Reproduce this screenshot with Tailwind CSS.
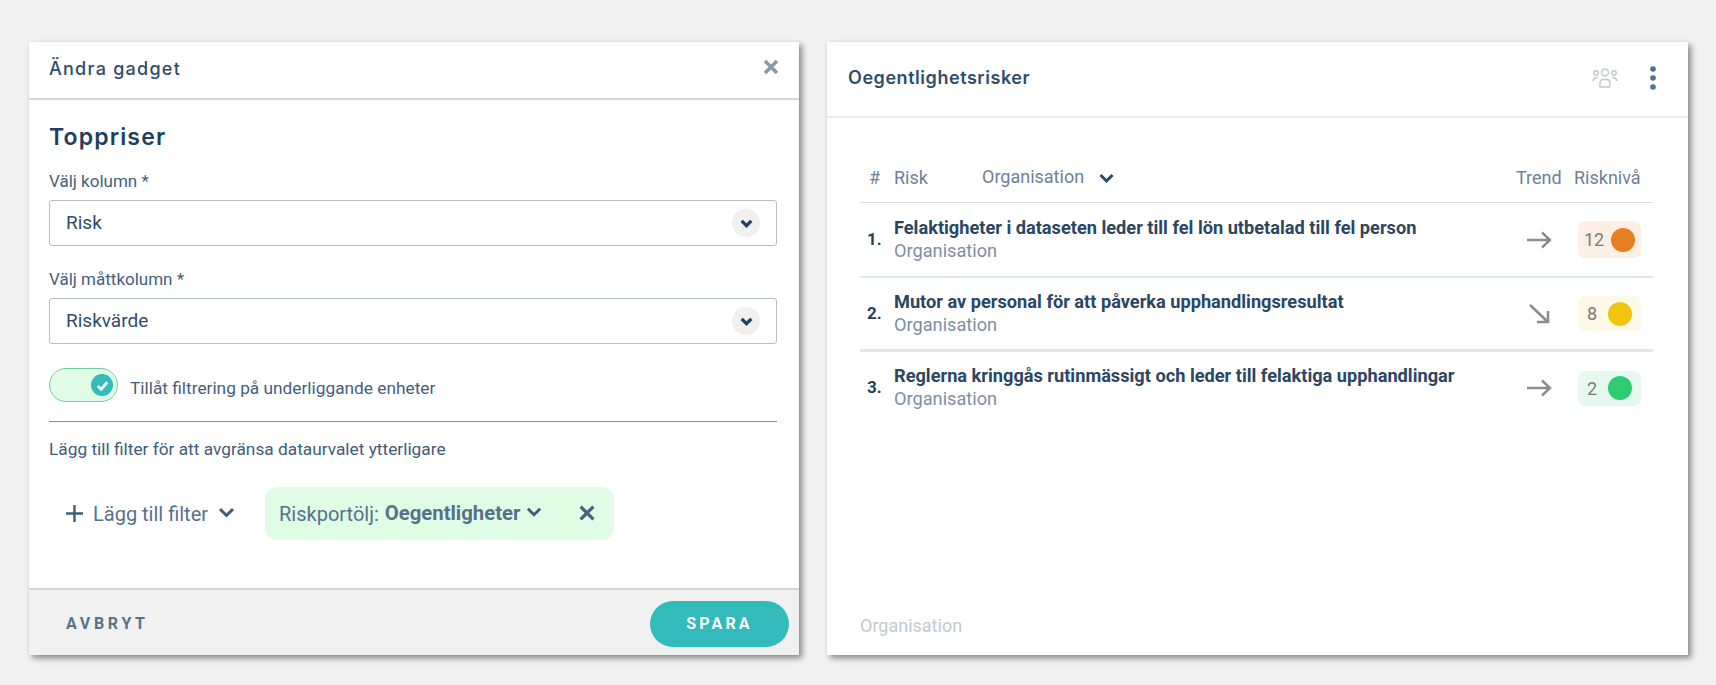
<!DOCTYPE html>
<html lang="sv">
  <head>
    <meta charset="UTF-8">
    <title>Oegentlighetsrisker</title>
    <script src="https://cdn.jsdelivr.net/npm/@tailwindcss/browser@4"></script>
  </head>
  <body class="w-[1716px] h-[685px] overflow-hidden bg-[#f1f1f1] font-['Roboto',sans-serif] text-[#44607c]">
    <div class="flex gap-[28px] pl-[29px] pt-[42px]">
      <!-- edit dialog -->
      <div class="w-[770px] h-[613px] flex flex-col bg-white shadow-[3px_3px_6px_rgba(0,0,0,0.45)]">
        <div class="h-[58px] shrink-0 flex items-center justify-between pl-[20px] pr-[20px] border-b-2 border-[#d5d8db]">
          <span class="mb-[3px] font-['Inter',sans-serif] font-medium text-[18px] tracking-[0.07em] text-[#2f4d69]">Ändra gadget</span>
          <svg class="w-[16px] h-[16px] mb-[7px]" viewBox="0 0 16 16" fill="none" stroke="#8b99a7" stroke-width="3.500">
            <path d="M2 2l12 12M14 2L2 14"></path>
          </svg>
        </div>
        <div class="flex-1 pl-[20px] pr-[22px] pt-[23px]">
          <h2 class="font-['Inter',sans-serif] font-semibold text-[23px] leading-[28px] tracking-[0.05em] text-[#1f3f5f]">Toppriser</h2>
          <label class="block mt-[20px] text-[17px] leading-[20px]">Välj kolumn *</label>
          <div class="mt-[9px] h-[46px] flex items-center justify-between pl-[16px] pr-[16px] border border-[#b4c0cc] rounded-[3px] text-[19px] text-[#2f4d69]">
            <span>Risk</span>
            <span class="w-[28px] h-[28px] flex items-center justify-center rounded-full bg-[#f0f0f0]">
              <svg class="w-[15px] h-[15px]" viewBox="0 0 14 14" fill="none" stroke="#1f3f5f" stroke-width="3"><path d="M2.500 4.500L7 9l4.500-4.500"></path></svg>
            </span>
          </div>
          <label class="block mt-[23px] text-[17px] leading-[20px]">Välj måttkolumn *</label>
          <div class="mt-[9px] h-[46px] flex items-center justify-between pl-[16px] pr-[16px] border border-[#b4c0cc] rounded-[3px] text-[19px] text-[#2f4d69]">
            <span>Riskvärde</span>
            <span class="w-[28px] h-[28px] flex items-center justify-center rounded-full bg-[#f0f0f0]">
              <svg class="w-[15px] h-[15px]" viewBox="0 0 14 14" fill="none" stroke="#1f3f5f" stroke-width="3"><path d="M2.500 4.500L7 9l4.500-4.500"></path></svg>
            </span>
          </div>
          <div class="mt-[24px] h-[34px] flex items-center gap-[12px]">
            <span class="w-[69px] h-[34px] flex items-center justify-end pr-[4px] rounded-full bg-[#e0fce4] border border-[#6fcfa5]">
              <span class="w-[22px] h-[22px] flex items-center justify-center rounded-full bg-[#33baba]">
                <svg class="w-[15px] h-[15px]" viewBox="0 0 14 14" fill="none" stroke="#fff" stroke-width="2.600"><path d="M2.500 7.500L5.800 10.500 11.500 4"></path></svg>
              </span>
            </span>
            <span class="text-[17.3px] mt-[8px]">Tillåt filtrering på underliggande enheter</span>
          </div>
          <div class="mt-[19px] h-px bg-[#8a929a]"></div>
          <p class="mt-[17px] text-[17.3px] leading-[20px] text-[#3f5c78]">Lägg till filter för att avgränsa dataurvalet ytterligare</p>
          <div class="mt-[28px] flex items-center">
            <div class="ml-[16px] w-[200px] flex items-center text-[20px] text-[#56718c]">
              <svg class="w-[19px] h-[19px] mr-[9px]" viewBox="0 0 19 19" fill="none" stroke="#3f5c78" stroke-width="2.400"><path d="M9.500 1v17M1 9.500h17"></path></svg>
              <span>Lägg till filter</span>
              <svg class="w-[17px] h-[17px] ml-[10px] mb-[2px]" viewBox="0 0 17 17" fill="none" stroke="#3f5c78" stroke-width="3"><path d="M2 5l6.500 6.500L15 5"></path></svg>
            </div>
            <div class="w-[349px] h-[53px] flex items-center pl-[14px] rounded-[12px] bg-[#e0fce4] text-[20px] text-[#56718c]">
              <span>Riskportölj:</span>
              <span class="ml-[6px] text-[20.300px] font-bold">Oegentligheter</span>
              <svg class="w-[16px] h-[16px] ml-[6px] mb-[4px]" viewBox="0 0 17 17" fill="none" stroke="#3f5c78" stroke-width="3"><path d="M2 5l6.500 6.500L15 5"></path></svg>
              <svg class="w-[16px] h-[16px] ml-[37px] mb-[2px]" viewBox="0 0 15 15" fill="none" stroke="#44607c" stroke-width="3"><path d="M1.500 1.500l12 12M13.500 1.500l-12 12"></path></svg>
            </div>
          </div>
        </div>
        <div class="h-[67px] shrink-0 flex items-center justify-between pl-[37px] pr-[10px] pt-[3px] bg-[#f1f1f1] border-t-2 border-[#d5d8db]">
          <span class="text-[16px] font-bold tracking-[0.23em] text-[#56718c]">AVBRYT</span>
          <span class="w-[139px] h-[46px] flex items-center justify-center rounded-full bg-[#33baba] text-[16px] font-bold tracking-[0.2em] text-white">SPARA</span>
        </div>
      </div>

      <!-- risk list gadget -->
      <div class="w-[861px] h-[613px] flex flex-col bg-white shadow-[3px_3px_6px_rgba(0,0,0,0.45)]">
        <div class="h-[76px] shrink-0 flex items-center justify-between pl-[21px] pr-[32px] border-b-2 border-[#ececec]">
          <span class="mb-[3px] font-['Inter',sans-serif] font-semibold text-[18px] tracking-[0.55px] text-[#2f4d69]">Oegentlighetsrisker</span>
          <div class="mb-[2px] flex items-center gap-[32px]">
            <svg class="w-[26px] h-[20px]" viewBox="0 0 26 20" fill="none" stroke="#c4c7ca" stroke-width="1.400">
              <circle cx="13" cy="4.500" r="3.500"></circle>
              <circle cx="4" cy="5" r="2.300"></circle>
              <circle cx="22" cy="5" r="2.300"></circle>
              <path d="M8 19v-4.500a3 3 0 0 1 3-3h4a3 3 0 0 1 3 3V18a1 1 0 0 1-1 1H9z"></path>
              <path d="M1 13c.5-2.500 2-3.500 4.500-3.500M25 13c-.5-2.500-2-3.500-4.500-3.500"></path>
            </svg>
            <svg class="w-[6px] h-[24px]" viewBox="0 0 6 24" fill="#4f7191">
              <circle cx="3" cy="3" r="2.800"></circle>
              <circle cx="3" cy="12" r="2.800"></circle>
              <circle cx="3" cy="21" r="2.800"></circle>
            </svg>
          </div>
        </div>
        <div class="flex-1 flex flex-col px-[33px]">
          <div class="mt-[41px] w-[793px] h-[44px] flex items-start pt-[9px] text-[18px] leading-[20px] text-[#6b8299] border-b border-[#d5dde8]">
            <span class="w-[34px] pl-[9px]">#</span>
            <span class="w-[88px]">Risk</span>
            <span class="-mt-[1px]">Organisation</span>
            <svg class="w-[15px] h-[15px] ml-[15px] mt-[3px]" viewBox="0 0 15 15" fill="none" stroke="#264a6b" stroke-width="3"><path d="M1.500 4l6 6 6-6"></path></svg>
            <span class="ml-auto w-[58px]">Trend</span>
            <span class="w-[79px]">Risknivå</span>
          </div>

          <div class="w-[793px] h-[75px] flex items-center border-b-2 border-[#e1e5ec]">
            <span class="w-[34px] pl-[7px] text-[17px] font-bold text-[#1f3f5f]">1.</span>
            <div class="flex-1 -mt-[1px]">
              <p class="text-[18.200px] leading-[23px] font-bold text-[#2a4662]">Felaktigheter i dataseten leder till fel lön utbetalad till fel person</p>
              <p class="text-[18.200px] leading-[23px] text-[#7b8fa3]">Organisation</p>
            </div>
            <svg class="w-[26px] h-[18px] mr-[26px]" viewBox="0 0 26 18" fill="none" stroke="#8c8c8c" stroke-width="2.400"><path d="M1 9h23M16 1.500L24 9l-8 7.500"></path></svg>
            <div class="w-[63px] h-[37px] mr-[12px] flex items-center justify-between pl-[6px] pr-[6px] rounded-[7px] bg-[#fdefe4] text-[18px] text-[#7a7a7a]">
              <span>12</span><span class="w-[24px] h-[24px] rounded-full bg-[#e67e22]"></span>
            </div>
          </div>

          <div class="w-[793px] h-[74px] flex items-center border-b-[3px] border-[#e1e5ec]">
            <span class="w-[34px] pl-[7px] text-[17px] font-bold text-[#1f3f5f]">2.</span>
            <div class="flex-1 -mt-[2px]">
              <p class="text-[18.200px] leading-[23px] font-bold text-[#2a4662]">Mutor av personal för att påverka upphandlingsresultat</p>
              <p class="text-[18.200px] leading-[23px] text-[#7b8fa3]">Organisation</p>
            </div>
            <svg class="w-[21px] h-[20px] mr-[28px]" viewBox="0 0 21 20" fill="none" stroke="#8c8c8c" stroke-width="2.600"><path d="M1 1l18 17M19 7v11H8"></path></svg>
            <div class="w-[63px] h-[35px] mr-[12px] flex items-center justify-between pl-[9px] pr-[9px] rounded-[7px] bg-[#fef9e6] text-[18px] text-[#7a7a7a]">
              <span>8</span><span class="w-[24px] h-[24px] rounded-full bg-[#f1c40f]"></span>
            </div>
          </div>

          <div class="w-[793px] h-[72px] flex items-center">
            <span class="w-[34px] pl-[7px] text-[17px] font-bold text-[#1f3f5f]">3.</span>
            <div class="flex-1 -mt-[2px]">
              <p class="text-[18.200px] leading-[23px] font-bold text-[#2a4662]">Reglerna kringgås rutinmässigt och leder till felaktiga upphandlingar</p>
              <p class="text-[18.200px] leading-[23px] text-[#7b8fa3]">Organisation</p>
            </div>
            <svg class="w-[26px] h-[18px] mr-[26px]" viewBox="0 0 26 18" fill="none" stroke="#8c8c8c" stroke-width="2.400"><path d="M1 9h23M16 1.500L24 9l-8 7.500"></path></svg>
            <div class="w-[63px] h-[35px] mr-[12px] flex items-center justify-between pl-[9px] pr-[9px] rounded-[7px] bg-[#e6f9ee] text-[18px] text-[#7a7a7a]">
              <span>2</span><span class="w-[24px] h-[24px] rounded-full bg-[#2ecc71]"></span>
            </div>
          </div>

          <p class="mt-auto mb-[18px] text-[18px] leading-[22px] text-[#c2cad2]">Organisation</p>
        </div>
      </div>
    </div>
  </body>
</html>
